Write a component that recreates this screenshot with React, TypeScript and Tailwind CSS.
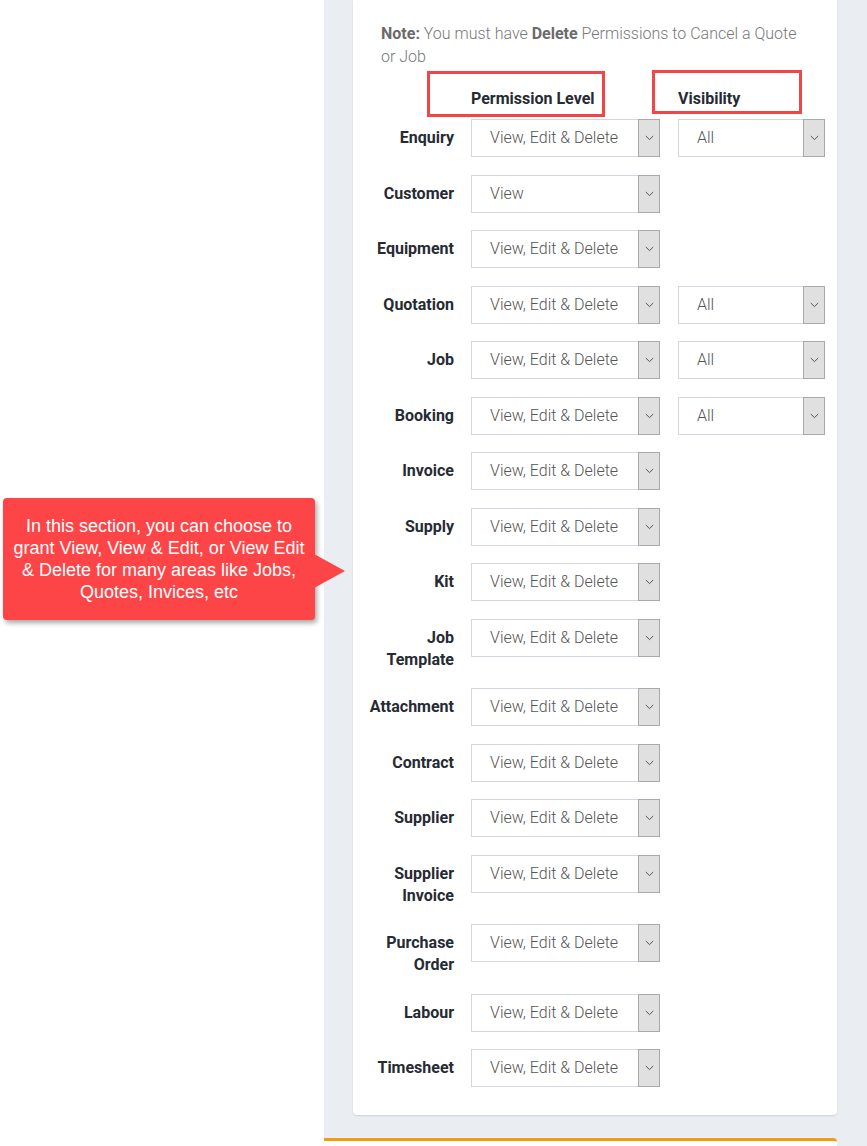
import React from "react";

type Row = { label: string[]; visibility?: boolean; value?: string };

const rows: Row[] = [
  { label: ["Enquiry"], visibility: true },
  { label: ["Customer"], value: "View" },
  { label: ["Equipment"] },
  { label: ["Quotation"], visibility: true },
  { label: ["Job"], visibility: true },
  { label: ["Booking"], visibility: true },
  { label: ["Invoice"] },
  { label: ["Supply"] },
  { label: ["Kit"] },
  { label: ["Job", "Template"] },
  { label: ["Attachment"] },
  { label: ["Contract"] },
  { label: ["Supplier"] },
  { label: ["Supplier", "Invoice"] },
  { label: ["Purchase", "Order"] },
  { label: ["Labour"] },
  { label: ["Timesheet"] },
];

function Chevron() {
  return (
    <svg width="9" height="6" viewBox="0 0 9 6" fill="none">
      <path d="M0.8 1 L4.5 4.6 L8.2 1" stroke="#555" strokeWidth="1" />
    </svg>
  );
}

function FakeSelect({ value, width }: { value: string; width: string }) {
  return (
    <div className={`flex h-[38px] ${width} border border-[#d3d6de] bg-white`}>
      <div className="flex flex-1 items-center pl-[18px] text-[16px] font-light text-[#555]">
        {value}
      </div>
      <div className="flex w-[22px] items-center justify-center border border-[#a9a9a9] bg-[#e0e0e0] -my-px -mr-px">
        <Chevron />
      </div>
    </div>
  );
}

export default function App() {
  return (
    <div className="flex h-[1146px] w-[867px] overflow-hidden bg-white font-['Roboto',sans-serif]">
      {/* left annotation column */}
      <div className="relative w-[324px] shrink-0 pt-[498px] pl-[3px]">
        <div className="relative w-[312px] h-[122px] rounded-[4px] bg-[#fd4547] shadow-[2px_3px_5px_rgba(0,0,0,0.35)] flex items-center justify-center px-[6px] text-center font-['Liberation_Sans',Arial,sans-serif] text-[18px] leading-[22px] text-white">
          In this section, you can choose to grant View, View &amp; Edit, or View Edit &amp; Delete for many areas like Jobs, Quotes, Invices, etc
          <svg
            className="absolute left-[311px] top-[56px]"
            width="32"
            height="34"
            viewBox="0 0 32 34"
          >
            <path d="M0 0 L31 17 L0 34 Z" fill="#fd4547" />
          </svg>
        </div>
      </div>

      {/* gray panel */}
      <div className="flex w-[543px] shrink-0 flex-col bg-[#eaedf2]">
        <div className="relative ml-[29px] w-[484px] rounded-b-[4px] bg-white pt-[22px] pb-[28px] shadow-[0_1px_2px_rgba(0,0,0,0.12)]">
          <p className="px-[28px] text-[16px] font-light leading-[23px] text-[#777]">
            <span className="font-bold text-[#6b6b6b]">Note:</span> You must have{" "}
            <span className="font-bold text-[#6b6b6b]">Delete</span> Permissions to Cancel a Quote or Job
          </p>

          <div className="mt-[20px] flex text-[16px] font-bold leading-[22px] text-[#262b33]">
            <div className="w-[118px]" />
            <div className="w-[207px]">Permission Level</div>
            <div>Visibility</div>
          </div>

          <div className="absolute left-[74px] top-[71px] h-[46px] w-[178px] border-[3px] border-[#f24646]" />
          <div className="absolute left-[299px] top-[70px] h-[44px] w-[150px] border-[3px] border-[#f24646]" />

          <div className="mt-[9px] flex flex-col gap-[17.5px]">
            {rows.map((r) => (
              <div key={r.label.join(" ")} className="flex items-start">
                <div className="w-[101px] pt-[8px] text-right text-[16px] font-bold leading-[22px] text-[#262b33]">
                  {r.label.map((l) => (
                    <div key={l}>{l}</div>
                  ))}
                </div>
                <div className="ml-[17px]">
                  <FakeSelect value={r.value ?? "View, Edit & Delete"} width="w-[189px]" />
                </div>
                {r.visibility && (
                  <div className="ml-[18px]">
                    <FakeSelect value="All" width="w-[147px]" />
                  </div>
                )}
              </div>
            ))}
          </div>
        </div>

        <div className="mt-[23px] h-[20px] w-[513px] rounded-tr-[4px] border-t-[3px] border-[#f39c12] bg-white" />
      </div>
    </div>
  );
}
